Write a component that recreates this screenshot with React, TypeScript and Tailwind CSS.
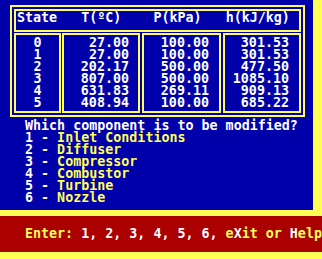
import React from 'react';

const rows = [
  ['0', '27.00', '100.00', '301.53'],
  ['1', '27.00', '100.00', '301.53'],
  ['2', '202.17', '500.00', '477.50'],
  ['3', '807.00', '500.00', '1085.10'],
  ['4', '631.83', '269.11', '909.13'],
  ['5', '408.94', '100.00', '685.22'],
];

const options = ['Inlet Conditions', 'Diffuser', 'Compressor', 'Combustor', 'Turbine', 'Nozzle'];

const Column = ({ index, width, align }: { index: number; width: string; align: string }) => (
  <div className={`${width} border-2 border-[#ffff55] pt-[2px] pb-[2px] ${align}`}>
    {rows.map((r, i) => (
      <div key={i} className="h-[12px] leading-[12px]">
        {r[index]}
      </div>
    ))}
  </div>
);

export default function App() {
  return (
    <div
      className="w-[322px] h-[259px] flex flex-col bg-[#ffff55] text-white font-bold text-[13.33px] leading-[12px] overflow-hidden"
      style={{ fontFamily: '"DejaVu Sans Mono", "Liberation Mono", monospace' }}
    >
      <div className="flex h-[210px]">
        <div className="w-[313px] h-[210px] bg-[#0000aa] pl-[10px] pt-[5px]">
          {/* Table frame */}
          <div className="w-[295px] h-[112px] border-2 border-[#ffff55] p-[2px] flex flex-col gap-[1px]">
            <div className="h-[23px] border-2 border-[#ffff55] pl-[1px] pt-[1px] whitespace-pre">
              <div className="h-[12px] leading-[12px]">State   T(ºC)    P(kPa)   h(kJ/kg)</div>
            </div>
            <div className="flex">
              <Column index={0} width="w-[47px]" align="text-center" />
              <div className="w-[1px]" />
              <Column index={1} width="w-[78px]" align="text-right pr-[9px]" />
              <div className="w-[2px]" />
              <Column index={2} width="w-[79px]" align="text-right pr-[10px]" />
              <div className="w-[2px]" />
              <Column index={3} width="w-[78px]" align="text-right pr-[10px]" />
            </div>
          </div>

          {/* Menu */}
          <div className="mt-[3px] pl-[15px] whitespace-pre">
            <div className="h-[12px]">Which component is to be modified?</div>
            {options.map((o, i) => (
              <div key={o} className="h-[12px]">
                {`${i + 1} - `}
                <span className="text-[#ffff55]">{o}</span>
              </div>
            ))}
          </div>
        </div>
        <div className="flex-1" />
      </div>

      <div className="h-[6px]" />
      <div className="h-[36px] bg-[#aa0000] pl-[25px] pt-[12px] whitespace-pre">
        <span className="text-[#ffff55]">Enter: </span>
        <span>1, 2, 3, 4, 5, 6, </span>
        <span className="text-[#ffff55]">e</span>
        <span>X</span>
        <span className="text-[#ffff55]">it or </span>
        <span>H</span>
        <span className="text-[#ffff55]">elp</span>
      </div>
    </div>
  );
}
